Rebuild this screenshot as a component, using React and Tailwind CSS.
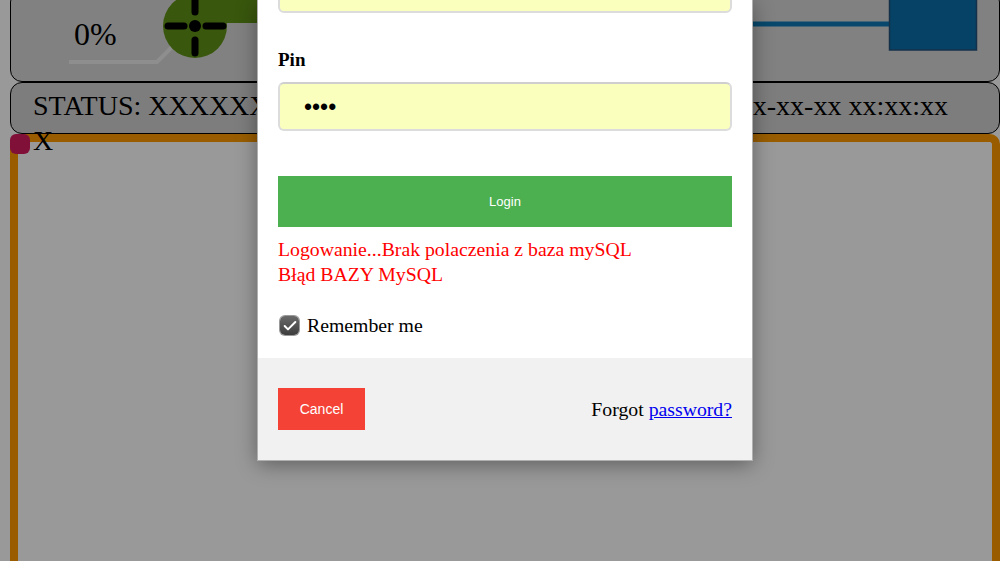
import { Check } from 'lucide-react';

const serif = 'font-["Liberation_Serif",serif]';

function Field({ label, className = '', children }) {
  return (
    <div className={className}>
      {label ? <div className="mb-[10px] text-[19px] font-bold leading-[24px] text-black">{label}</div> : null}
      <div className="flex h-[49px] items-center rounded-[6px] border-2 border-[#dcdcdc] border-t-[#cfcfcf] bg-[#fbffbd] pl-[24px]">{children}</div>
    </div>
  );
}

function Diagram() {
  return (
    <svg className="absolute left-0 top-0" width="988" height="90" viewBox="0 0 988 90" fill="none">
      <path d="M58 71 H146 L161 56" stroke="#ffffff" strokeWidth="4" opacity="0.55" />
      <rect x="184" y="0" width="63" height="32" fill="#5f9116" />
      <circle cx="184" cy="35" r="32" fill="#5f9116" />
      <g stroke="#000000" strokeWidth="7" strokeLinecap="round">
        <path d="M184 8 V21" />
        <path d="M184 49 V62" />
        <path d="M157 35 H173" />
        <path d="M195 35 H212" />
      </g>
      <circle cx="184" cy="35" r="6" fill="#000000" />
      <path d="M730 33 H879" stroke="#0c78b4" strokeWidth="5" />
      <rect x="878.5" y="0" width="87" height="59" fill="#0a6ea8" stroke="#24527a" strokeWidth="1.5" />
    </svg>
  );
}

export default function App() {
  return (
    <div className={`relative h-[561px] w-[1000px] overflow-hidden bg-white ${serif}`}>
      <div className="flex h-full flex-col pl-[10px]">
        <div className="relative -mt-[10px] h-[92px] shrink-0 rounded-[12px] border border-black bg-[#d8d8d8]">
          <Diagram />
          <div className="absolute left-[63px] top-[23px] text-[32px] leading-[40px] text-black">0%</div>
        </div>
        <div className="flex h-[52px] shrink-0 justify-between rounded-[12px] border border-black bg-[#d0d0d0] pl-[22px] pr-[51px] pt-[7px] text-[28px] leading-[32px] text-black">
          <span>STATUS: XXXXXX</span>
          <span>xx-xx-xx xx:xx:xx</span>
        </div>
        <div className="relative min-h-0 flex-1 rounded-t-[10px] border-[8px] border-b-0 border-[#ff9c00] bg-white">
          <span className="absolute -top-[17px] left-[15px] text-[28px] leading-[32px] text-black">X</span>
          <span className="absolute -left-[8px] -top-[8px] h-[20px] w-[20px] rounded-[6px] bg-[#d81b60]" />
        </div>
      </div>

      <div className="absolute inset-0 bg-black/40" />

      <div className="absolute left-[258px] top-0 flex h-[460px] w-[494px] flex-col bg-white shadow-[0_4px_20px_rgba(0,0,0,0.4)] outline outline-1 outline-[#b0b0b0]">
        <div className="flex-1 px-[20px]">
          <div className="-mt-[36px] h-[49px] rounded-[6px] border-2 border-[#dcdcdc] bg-[#fbffbd]" />
          <Field label="Pin" className="mt-[35px]">
            <span className="relative top-px font-['Liberation_Sans',sans-serif] text-[23px] leading-none text-black">••••</span>
          </Field>
          <button className="mt-[45px] flex h-[51px] w-full items-center justify-center bg-[#4caf50] font-['Liberation_Sans',sans-serif] text-[13px] text-white">
            Login
          </button>
          <div className="mt-[10px] text-[19.75px] leading-[25px] text-[#ff0000]">
            <div>Logowanie...Brak polaczenia z baza mySQL</div>
            <div>Błąd BAZY MySQL</div>
          </div>
          <label className="mt-[26px] flex items-center text-[19.75px] leading-[25px] text-black">
            <span className="ml-[2px] mr-[8px] flex h-[19px] w-[19px] items-center justify-center rounded-[5px] bg-gradient-to-b from-[#6a6a6a] to-[#3e3e3e] shadow-[0_0_0_1px_#9a9a9a]">
              <Check className="h-[16px] w-[16px] text-white" strokeWidth={3} />
            </span>
            Remember me
          </label>
        </div>
        <div className="flex h-[102px] shrink-0 items-center justify-between bg-[#f1f1f1] px-[20px]">
          <button className="flex h-[42px] w-[87px] items-center justify-center bg-[#f44336] font-['Liberation_Sans',sans-serif] text-[14px] text-white">
            Cancel
          </button>
          <div className="text-[19.75px] leading-[25px] text-black">
            Forgot <a href="#" className="text-[#0000ee] underline">password?</a>
          </div>
        </div>
      </div>
    </div>
  );
}
